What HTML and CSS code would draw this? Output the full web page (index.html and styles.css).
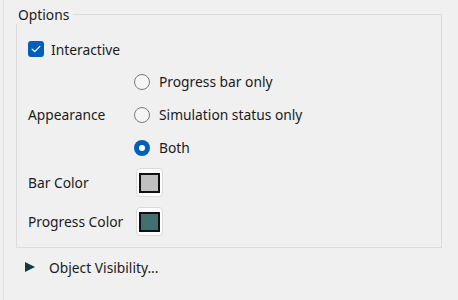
FILE: index.html
```html
<!DOCTYPE html>
<html>
<head>
<meta charset="utf-8">
<link rel="stylesheet" href="styles.css">
</head>
<body>
<div class="panel">
  <div class="group">
    <div class="legend">Options</div>
    <div class="row row-check">
      <span class="checkbox">
        <svg width="10" height="8" viewBox="0 0 10 8"><path d="M1.2 4.2 L3.8 6.6 L8.8 1.4" fill="none" stroke="#fff" stroke-width="1.3" stroke-linecap="round" stroke-linejoin="round"/></svg>
      </span>
      <span class="check-label">Interactive</span>
    </div>
    <div class="form">
      <div class="label appearance">Appearance</div>
      <div class="radios">
        <div class="radio-row"><span class="radio"></span><span>Progress bar only</span></div>
        <div class="radio-row"><span class="radio"></span><span>Simulation status only</span></div>
        <div class="radio-row"><span class="radio checked"></span><span>Both</span></div>
      </div>
      <div class="label color-label first">Bar Color</div>
      <div class="swatch-cell first"><span class="swatch"><span class="swatch-fill bar"></span></span></div>
      <div class="label color-label second">Progress Color</div>
      <div class="swatch-cell second"><span class="swatch"><span class="swatch-fill progress"></span></span></div>
    </div>
  </div>
  <div class="expander">
    <svg class="tri" width="10" height="10" viewBox="0 0 10 10"><path d="M0 0 L10 5 L0 10 Z" fill="#163a40"/></svg>
    <span>Object Visibility...</span>
  </div>
</div>
</body>
</html>
```
FILE: styles.css
```css
html, body {
  margin: 0;
  padding: 0;
  background: #f0f0f0;
}
body {
  font-family: "Noto Sans", "Open Sans", sans-serif;
  font-size: 13.8px;
  color: #1b1b1b;
  width: 458px;
  height: 300px;
  overflow: hidden;
}
.panel {
  margin-left: 3px;
  width: 449px;
  height: 300px;
  border-left: 1px solid #e2e2e2;
  border-right: 2px solid #fafafa;
  padding: 14px 12px 0 12px;
  box-sizing: content-box;
}
.group {
  position: relative;
  border: 1px solid #dcdcdc;
  padding: 18px 0 0 11px;
  box-sizing: border-box;
  height: 234px;
  width: 426px;
}
.legend {
  position: absolute;
  left: -1px;
  top: -10px;
  height: 19px;
  line-height: 19px;
  padding: 0 4px 0 2px;
  background: #f0f0f0;
}
.row {
  display: flex;
  align-items: center;
}
.row-check {
  height: 32px;
}
.checkbox {
  width: 16px;
  height: 16px;
  border-radius: 3px;
  background: #005fb8;
  display: flex;
  align-items: center;
  justify-content: center;
  margin-right: 7px;
}
.form {
  display: grid;
  grid-template-columns: 106px auto;
  grid-template-rows: auto auto auto;
}
.label {
  display: flex;
  align-items: center;
}
.first { margin-top: 4px; }
.second { margin-top: 10px; }
.radios {
  display: flex;
  flex-direction: column;
}
.radio-row {
  height: 33px;
  display: flex;
  align-items: center;
}
.radio {
  width: 16px;
  height: 16px;
  box-sizing: border-box;
  border: 1px solid #7a7a7a;
  border-radius: 50%;
  background: #f6f6f6;
  margin-right: 9px;
  display: flex;
  align-items: center;
  justify-content: center;
}
.radio.checked {
  border: none;
  background: #005fb8;
}
.radio.checked::after {
  content: "";
  width: 6px;
  height: 6px;
  border-radius: 50%;
  background: #fff;
}
.swatch-cell {
  display: flex;
  align-items: center;
  margin-left: 2px;
  height: 29px;
}
.swatch {
  width: 27px;
  height: 29px;
  box-sizing: border-box;
  border: 1px solid #dadada;
  border-radius: 4px;
  background: #fdfdfd;
  display: flex;
  align-items: center;
  justify-content: center;
}
.swatch-fill {
  width: 21px;
  height: 20px;
  box-sizing: border-box;
  border: 2px solid #111;
}
.swatch-fill.bar { background: #c0c0c0; }
.swatch-fill.progress { background: #417071; }
.expander {
  display: flex;
  align-items: center;
  height: 20px;
  margin-top: 9px;
  padding-left: 9px;
}
.tri {
  margin-right: 14px;
}
```
